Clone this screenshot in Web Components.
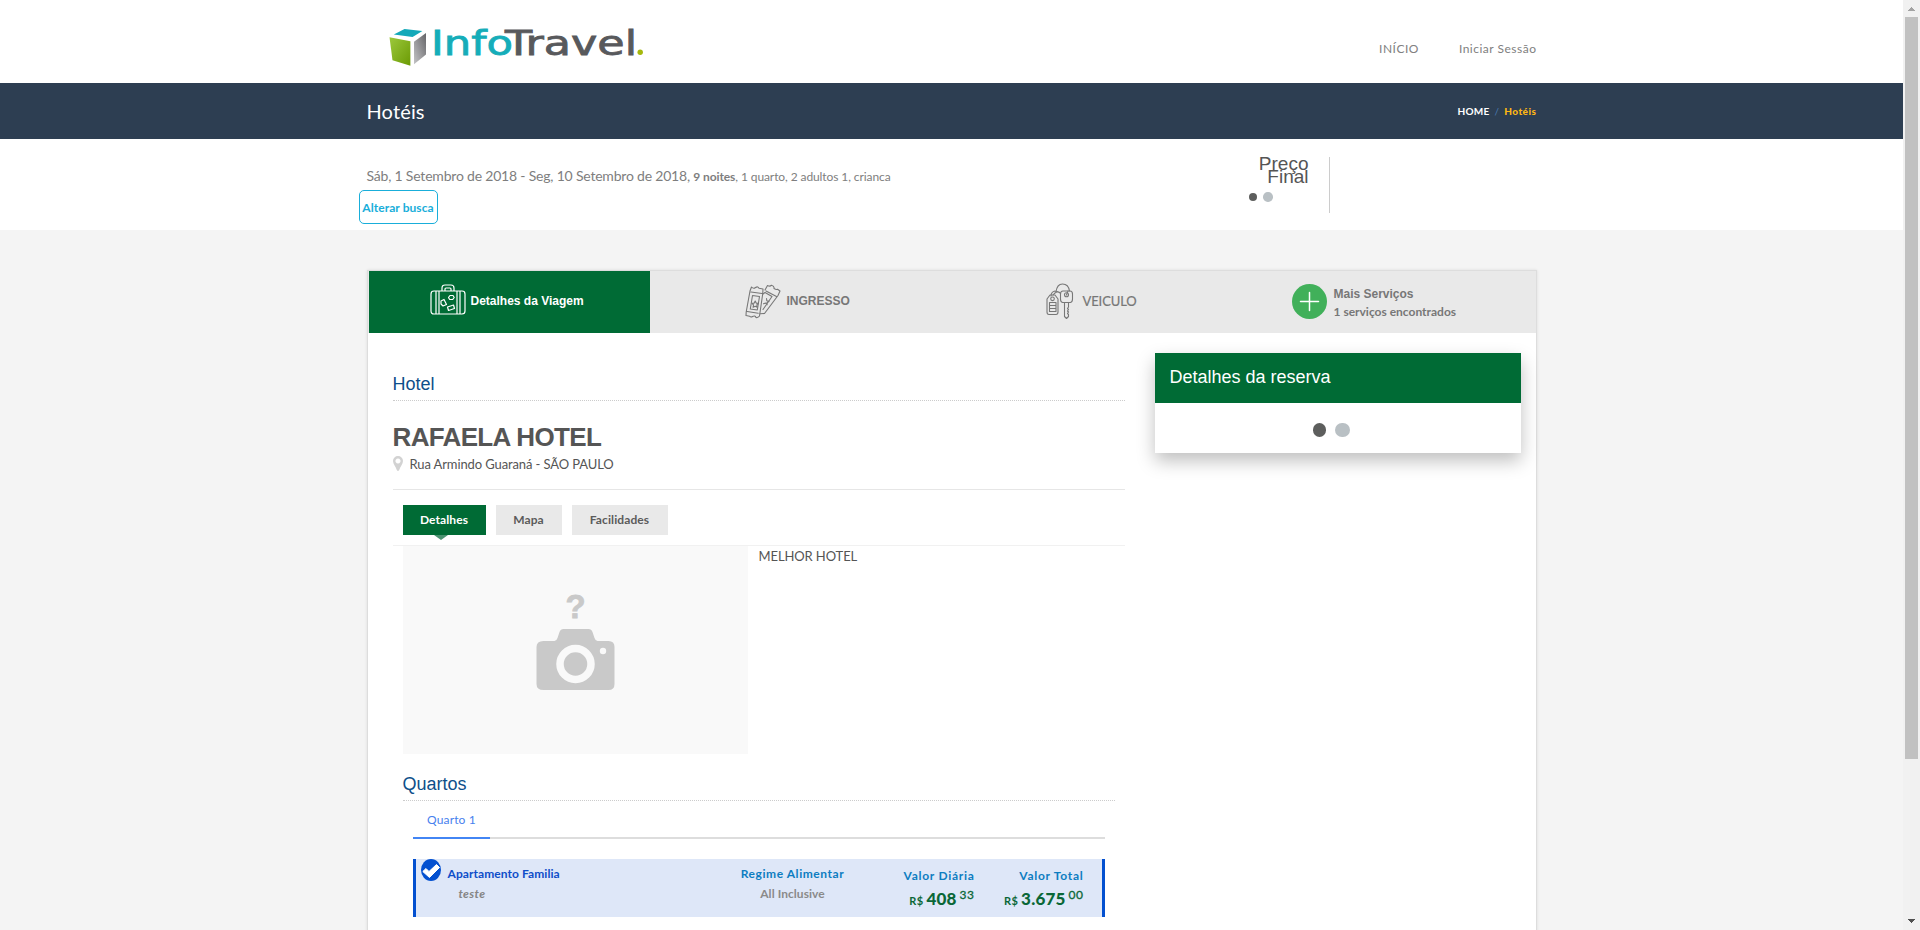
<!DOCTYPE html>
<html lang="pt-BR">
<head>
<meta charset="utf-8">
<title>Hotéis</title>
<style>
html,body{margin:0;height:930px;overflow:hidden;background:#f4f4f4;font-family:Lato,sans-serif}
*{box-sizing:border-box}
</style>
</head>
<body>
<app-shell>
  <site-header slot="page"></site-header>
  <title-bar slot="page">Hotéis</title-bar>
  <search-summary slot="page"></search-summary>
  <trip-panel slot="page">
    <service-tabs slot="tabs"></service-tabs>
    <hotel-details slot="main"></hotel-details>
    <booking-card slot="side">Detalhes da reserva</booking-card>
  </trip-panel>
</app-shell>
<script>
const define = (name, html) => customElements.define(name, class extends HTMLElement {
  constructor() {
    super();
    this.attachShadow({mode: 'open'}).innerHTML = '<style>*{box-sizing:border-box}:host{display:block;box-sizing:border-box}</style>' + html;
  }
});

define('app-shell', `
<style>
:host{display:flex;width:100%;height:930px;overflow:hidden}
main{flex:1;min-width:0;height:930px;overflow:hidden}
</style>
<main><slot name="page"></slot></main><page-scrollbar></page-scrollbar>`);

define('page-scrollbar', `
<style>
:host{width:17px;height:930px;background:#f1f1f1;display:flex;flex-direction:column;align-items:center}
.b{height:17px;width:17px;display:block}
.t{width:13px;height:742px;background:#c1c1c1}
.s{flex:1}
</style>
<svg class="b" viewBox="0 0 17 17" shape-rendering="crispEdges"><path d="M5 11h7v-1h-1v-1h-1v-1h-1v-1h-1v1h-1v1h-1v1h-1z" fill="#a3a3a3"/></svg>
<div class="t"></div><div class="s"></div>
<svg class="b" viewBox="0 0 17 17" shape-rendering="crispEdges"><path d="M5 6h7v1h-1v1h-1v1h-1v1h-1v-1h-1v-1h-1v-1h-1z" fill="#505050"/></svg>`);

define('brand-logo', `
<style>svg{display:block}text{font-family:"DejaVu Sans",sans-serif}</style>
<svg width="256" height="60" viewBox="388 13 256 60">
<defs><linearGradient id="g" x1="0" x2="1" y2="1"><stop stop-color="#9cc93c"/><stop offset="1" stop-color="#6b9a04"/></linearGradient>
<linearGradient id="k" x1="0" x2="1" y1="1" y2="0"><stop stop-color="#c4c4c6"/><stop offset="1" stop-color="#646467"/></linearGradient></defs>
<path d="M389.5 37.2 410.4 41.2V65.8L392.5 60.3Z" fill="url(#g)"/>
<path d="M393.8 34.6 404.500 29 422.4 31 412.6 37Z" fill="#13a9b9"/>
<path d="M414 41.8 426 33V54.5L414 64.3Z" fill="url(#k)"/>
<text x="431" y="54.5" font-size="33" fill="#15adb9" textLength="82" lengthAdjust="spacingAndGlyphs" stroke="#15adb9" stroke-width=".8">Info</text>
<text x="505" y="54.5" font-size="33" fill="#58595c" textLength="132" lengthAdjust="spacingAndGlyphs" stroke="#58595c" stroke-width=".8">Travel</text>
<circle cx="640.2" cy="52.2" r="2.7" fill="#a5b80c"/>
</svg>`);

define('site-header', `
<style>
:host{height:83px;background:#fff}
.w{width:1170px;margin:0 auto;display:flex;justify-content:space-between}
brand-logo{margin:13px 0 0 21px}
nav{display:flex;gap:40px;padding-top:40px;font-size:12px;line-height:18px;color:#808080;letter-spacing:.5px}
nav span{white-space:nowrap}
</style>
<div class="w"><brand-logo></brand-logo><nav><span>INÍCIO</span><span>Iniciar Sessão</span></nav></div>`);

define('title-bar', `
<style>
:host{height:56px;background:#2d3e52}
.w{width:1170px;height:56px;margin:0 auto;display:flex;justify-content:space-between;align-items:center}
h1{font-size:20px;font-weight:400;color:#fff;margin:0;line-height:24px;letter-spacing:.15px}
nav{font-size:10px;font-weight:700;color:#fff;display:flex;gap:5px;line-height:14px;letter-spacing:.2px}
i{color:#4a7ab0;font-style:normal;font-weight:400}b{color:#fdb714;letter-spacing:.5px}
</style>
<div class="w"><h1><slot></slot></h1><nav><span>HOME</span><i>/</i><b>Hotéis</b></nav></div>`);

define('wait-dots', `
<style>:host{display:flex;align-items:center;gap:var(--gap,6px)}
i{width:var(--d,8px);height:var(--d,8px);border-radius:50%;background:#5d5e5d}
i+i{width:calc(var(--d,8px) + 1px);height:calc(var(--d,8px) + 1px);background:#b9c0c4}</style><i></i><i></i>`);

define('search-summary', `
<style>
:host{height:91px;background:#fff}
.w{width:1170px;margin:0 auto;display:flex}
.l{width:881px;padding-top:27px;color:#7e7e7e}
p{margin:0;font-size:14px;line-height:20px;white-space:nowrap;letter-spacing:-.2px}
small{font-size:12px;letter-spacing:-.09px}
button{display:block;font:700 12px/18px Lato,sans-serif;letter-spacing:.08px;color:#19aeda;background:#fff;border:1px solid #19aeda;border-radius:5px;height:34px;width:79px;padding:1px 0 0;margin:3px 0 0 -8px;white-space:nowrap}
.r{width:82px;height:56px;margin-top:18px;border-right:1px solid #ccc;padding-right:20px;text-align:right;font:19px/13px "Liberation Sans",sans-serif;color:#555}
wait-dots{--d:8.500px;margin:9px 0 0 1px}
</style>
<div class="w"><div class="l"><p><span id="d">Sáb, 1 Setembro de 2018 - Seg, 10 Setembro de 2018,</span> <small><b>9 noites</b>, 1 quarto, 2 adultos 1, crianca</small></p><button>Alterar busca</button></div>
<div class="r">Preço<br>Final<wait-dots></wait-dots></div></div>`);

define('trip-panel', `
<style>
:host{width:1170px;height:700px;margin:40px auto 0;background:#fff;border:1px solid #ddd;box-shadow:0 0 3px rgba(0,0,0,.1)}
.c{display:flex;justify-content:space-between;padding:20px 15px 0 25px}
</style>
<slot name="tabs"></slot><div class="c"><slot name="main"></slot><slot name="side"></slot></div>`);

define('service-tabs', `
<style>
:host{display:flex;height:62px;background:#e9e9e9;padding-left:1px;font:700 12px/18px "Liberation Sans",sans-serif;color:#777}
div{display:flex;align-items:center;white-space:nowrap;height:62px;padding-bottom:2px}
div>span{display:block}
.a{width:281px;background:#006b35;color:#fff;padding-left:61px}
.b{padding-left:95px;width:299px}
.c{padding-left:97px;width:246px;font:400 13px/18px Lato,sans-serif;letter-spacing:-.1px;-webkit-text-stroke:.2px}
.d{padding-left:97px}
.d>span{padding-top:3px}
svg{display:block;flex:none;fill:none;stroke:currentColor;stroke-width:1.2;stroke-linejoin:round;stroke-linecap:round}
.a svg{margin-right:5px;position:relative;top:1px}.b svg{margin-right:6px}.c svg{margin-right:9px}.d svg{margin-right:7px}
small{display:block;font:700 12px/18px Lato,sans-serif}
</style>
<div class="a"><svg width="36" height="36" viewBox="0 0 36 36"><path d="M12 7V4q0-3 3-3h6q3 0 3 3v3M15 7V5q0-1 1-1h4q1 0 1 1v2M4 7h2v23H4q-3 0-3-3V10q0-3 3-3zM32 7h-2v23h2q3 0 3-3V10q0-3-3-3zM6 7h24v23H6zM9 7v23M27 7v23"/><path d="M18.500 13.500 20 11.500h3l1.200 2-1.500 2h-3zM11 17l3-1.500 2.500 5-3.500 1.500-2-2zM17.500 23l6-2 1 3.500-6 2z"/></svg><span>Detalhes da Viagem</span></div>
<div class="b"><svg width="36" height="36" viewBox="0 0 36 36"><g stroke-width="1.1"><path d="M6.500 4q2 2.200 4 .5 2.500-1.500 3.500.8l4 .7-.3 5-3.200 22q-1.500 2-3.500 1.500-1-2.500-3.500-1-1.500 1.200-3-.3l-3.500-.7.2-3.500L5 8zM6 9l11 1.500M2.200 28.500l11 1.800M7.500 12.500l7 1-2.200 13.500-7-1z"/><path d="M10.200 18l1 2.100 2.300.3-1.700 1.500.4 2.300-2-1-2.100 1 .4-2.300-1.500-1.500 2.200-.3z"/><path d="M20 7l2.500-4.500q2.500 1.500 4-.3Q29.500 3 29 5.500q2.300 1.500 3.500.8l2.500 1.700-2 4.500-13.500 18-4.500.2M21 8l10.500 5.500M18 11l2-1.500 7 4-9 13M21.500 15.500l.3 2.300 2.200.7-2 1 .1 2.200-1.500-1.600-2.100.7"/></g></svg><span>INGRESSO</span></div>
<div class="c"><svg width="28" height="36" viewBox="0 0 28 36"><g stroke-width="1.100"><path d="M10 9Q11 1 16.500 1q6 0 7 7M5 13q0-4 4-5l3 1M7 12q4-5 7-2"/><path d="M4 12h5l3 4v13q0 2.500-2 2.500H3Q1 31.500 1 29V16zM3.500 19.500h6.500v9H3.500zM3.500 22.500H10M3.500 25.500H10"/><circle cx="6.500" cy="15.800" r="1.800"/><path d="M17 8h7q2.500 0 2.500 3v5q0 3-2 3.500h-8q-2-.5-2-3.500v-5q0-3 2.500-3zM18.500 20v13.500l2 2 2-2v-2l-1-1 1-1.500-1-1 1-1.500-1-1 1-1.500V20"/><circle cx="20.500" cy="11.800" r="2"/><path d="M20.500 12 22 8"/></g></svg><span>VEICULO</span></div>
<div class="d"><svg width="35" height="35" viewBox="0 0 35 35"><circle cx="17.500" cy="17.500" r="17.500" fill="#41b05a" stroke="none"/><path d="M17.500 8.500v18M8.500 17.500h18" stroke="#fff" stroke-width="1.500"/></svg><span>Mais Serviços<small>1 serviços encontrados</small></span></div>`);

define('sub-title', `
<style>:host{font:18px/22px "Liberation Sans",sans-serif;color:#0e4f8a;border-bottom:1px dotted #ccc;height:28px}</style><slot></slot>`);

define('detail-tab', `
<style>:host{position:relative;height:30px;text-align:center;font:700 12px/29px Lato,sans-serif;letter-spacing:.1px;color:#5b5b5b;background:#e9e9e9}
:host([active]){background:#006b35;color:#fff}
:host([active])::after{content:"";position:absolute;top:30px;left:31px;border:7px solid transparent;border-top:5px solid #4a9270;border-bottom:0}</style><slot></slot>`);

define('no-photo', `
<style>:host{width:345px;height:208px;background:#f9f9f9}svg{display:block}text{font:700 34px "Liberation Sans",sans-serif}</style>
<svg width="345" height="208" viewBox="0 0 345 208"><text x="162.500" y="72" fill="#c9c9c9" stroke="#c9c9c9" stroke-width=".8" textLength="20" lengthAdjust="spacingAndGlyphs">?</text>
<path d="M140.500 95h11q2 0 3-3l2-6q1-3 4-3h25q3 0 4 3l2 6q1 3 3 3h11q6 0 6 6v37q0 6-6 6h-65q-7 0-7-6v-37q0-6 7-6z" fill="#c9c9c9"/><circle cx="172.500" cy="118" r="15.500" fill="none" stroke="#f9f9f9" stroke-width="7.500"/><circle cx="200" cy="105" r="3.200" fill="#f9f9f9"/></svg>`);

define('room-row', `
<style>
:host{display:flex;height:58px;background:#dee7f8;border:0 solid #0350d0;border-width:0 3px;font-size:12px;line-height:20px;font-weight:700}
svg{margin:0 7px 0 5px;flex:none}
.n{width:280px;padding-top:5px;color:#0f4ec9;letter-spacing:.07px}.n i{display:block;color:#858585;padding-left:11px;letter-spacing:.35px}
.r{width:130px;text-align:center;padding-top:5px;color:#0d7dc1;letter-spacing:.56px}.r span{display:block;color:#8a8a8a;letter-spacing:.05px}
.v{text-align:right;padding-top:7px;color:#0d7dc1;letter-spacing:.72px}
.v1{width:117px}.v2{width:109px}
.p{height:24px;line-height:26px;color:#0a6737;display:flex;align-items:baseline;justify-content:flex-end;gap:3px;letter-spacing:.3px}
.p b{font-size:17px;letter-spacing:.2px}.p small{font-size:11px}.p em{font-style:normal;font-weight:400;-webkit-text-stroke:.3px;align-self:flex-start;line-height:17px;letter-spacing:.5px}
</style>
<svg width="20" height="22" viewBox="0 0 20 22"><ellipse cx="10" cy="11" rx="10" ry="11" fill="#0350d0"/><path d="M1.800 12.500 5 9.500 8 12.500 15.500 5.500 18.500 8.500 8.500 18.500Z" fill="#fff" stroke="#fff" stroke-linejoin="round"/></svg>
<div class="n">Apartamento Familia<i>teste</i></div>
<div class="r">Regime Alimentar<span>All Inclusive</span></div>
<div class="v v1">Valor Diária<div class="p"><small>R$</small><b>408</b><em>33</em></div></div>
<div class="v v2">Valor Total<div class="p"><small>R$</small><b>3.675</b><em>00</em></div></div>`);

define('hotel-details', `
<style>
:host{width:732px}
sub-title{margin-top:20px}
h2{font:700 26px/30px "Liberation Sans",sans-serif;color:#555;margin:21px 0 0;letter-spacing:-.65px;white-space:nowrap}
.ad{display:flex;align-items:center;gap:7px;font-size:13px;line-height:20px;color:#555;padding-bottom:15px;margin-top:1px;height:37px;border-bottom:1px solid #e6e6e6;letter-spacing:-.11px}
.t{display:flex;gap:10px;padding:15px 0 0 10px;height:56px;border-bottom:1px solid #f1f1f1}
.t :nth-child(1){width:83px}.t :nth-child(2){width:66px}.t :nth-child(3){width:96px}
.i{display:flex;gap:11px;padding-left:10px;font-size:13px;line-height:20px;color:#555;letter-spacing:-.1px}
.q{padding:0 10px}
.q sub-title{margin-top:19px;height:28px}
.x{margin:0 10px}
.k{height:38px;display:flex;border-bottom:2px solid #ddd;margin-bottom:20px}
.k span{height:38px;width:77px;text-align:center;color:#4781ee;font-size:12px;line-height:37px;border-bottom:2px solid #4285f4;letter-spacing:.15px;padding-left:1px}
</style>
<sub-title>Hotel</sub-title>
<h2>RAFAELA HOTEL</h2>
<div class="ad"><svg width="10" height="15" viewBox="0 0 10 15"><path fill-rule="evenodd" d="M5 0a5 5 0 0 1 5 5c0 3-3 6-3.800 9q-1.200 2-2.400 0C3 11 0 8 0 5a5 5 0 0 1 5-5zm0 2.600a2.500 2.500 0 1 0 .01 0z" fill="#d2d2d2"/></svg><span>Rua Armindo Guaraná - SÃO PAULO</span></div>
<div class="t"><detail-tab active>Detalhes</detail-tab><detail-tab>Mapa</detail-tab><detail-tab>Facilidades</detail-tab></div>
<div class="i"><no-photo></no-photo><span>MELHOR HOTEL</span></div>
<div class="q"><sub-title>Quartos</sub-title><div class="x"><div class="k"><span>Quarto 1</span></div><room-row></room-row></div></div>`);

define('booking-card', `
<style>
:host{width:366px;height:100px;background:#fff;box-shadow:0 8px 17px rgba(0,0,0,.25)}
h3{margin:0;height:50px;background:#006b35;color:#fff;font:400 18px/48px "Liberation Sans",sans-serif;padding-left:15px}
wait-dots{--d:13.500px;--gap:9px;height:54px;margin-left:158px}
</style>
<h3><slot></slot></h3><wait-dots></wait-dots>`);
</script>
</body>
</html>
